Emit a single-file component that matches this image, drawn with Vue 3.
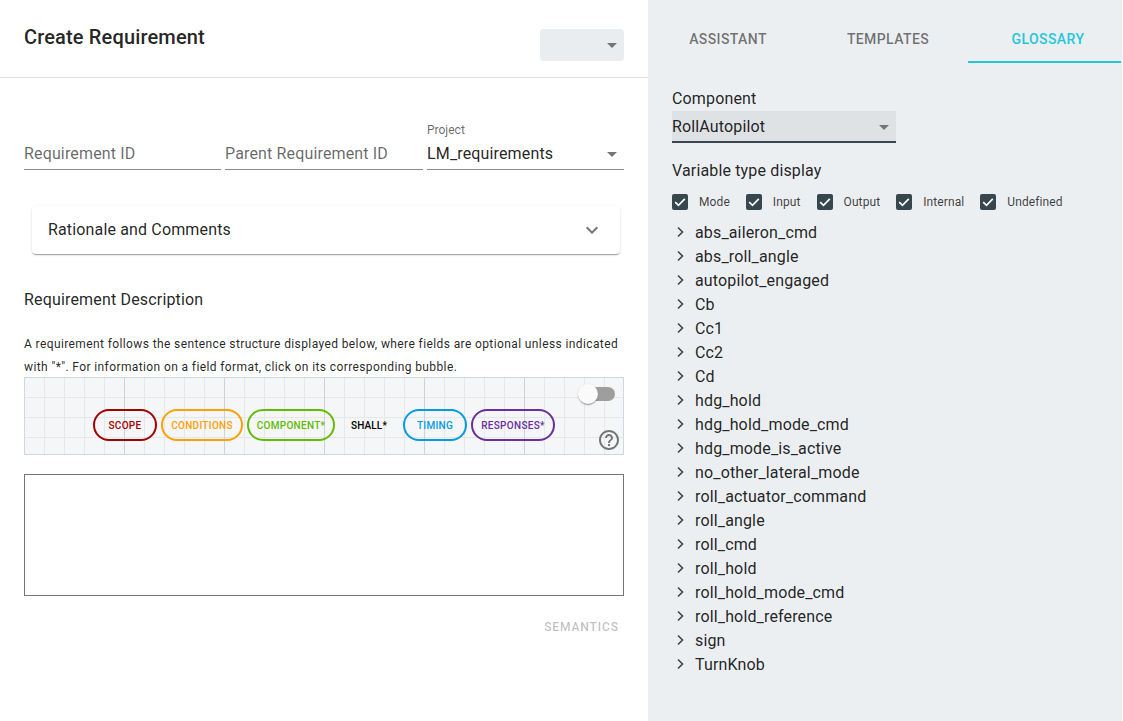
<template>
  <div class="page">
    <main class="left">
      <header class="head">
        <h1>Create Requirement</h1>
        <div class="status-select"><span class="arrow"></span></div>
      </header>

      <section class="body">
        <div class="fields">
          <div class="field"><span class="placeholder">Requirement ID</span></div>
          <div class="field"><span class="placeholder">Parent Requirement ID</span></div>
          <div class="field">
            <label>Project</label>
            <span class="value">LM_requirements</span>
            <span class="arrow"></span>
          </div>
        </div>

        <div class="accordion">
          <span>Rationale and Comments</span>
          <svg width="24" height="24" viewBox="0 0 24 24"><path d="M7.41 8.59 12 13.17l4.59-4.58L18 10l-6 6-6-6z" fill="#757575"/></svg>
        </div>

        <h2>Requirement Description</h2>
        <p class="hint">A requirement follows the sentence structure displayed below, where fields are optional unless indicated with "*". For information on a field format, click on its corresponding bubble.</p>

        <div class="sentence">
          <div class="toggle"><span class="track"></span><span class="thumb"></span></div>
          <div class="bubbles">
            <span v-for="b in bubbles" :key="b.text" class="bubble" :class="b.cls">{{ b.text }}</span>
          </div>
          <svg class="help" width="24" height="24" viewBox="0 0 24 24"><path d="M11 18h2v-2h-2v2zm1-16C6.48 2 2 6.48 2 12s4.480 10 10 10 10-4.480 10-10S17.520 2 12 2zm0 18c-4.410 0-8-3.590-8-8s3.590-8 8-8 8 3.590 8 8-3.590 8-8 8zm0-14c-2.210 0-4 1.790-4 4h2c0-1.100.9-2 2-2s2 .9 2 2c0 2-3 1.750-3 5h2c0-2.250 3-2.500 3-5 0-2.210-1.790-4-4-4z" fill="#757575"/></svg>
        </div>

        <div class="editor"></div>
        <div class="actions"><span class="semantics">SEMANTICS</span></div>
      </section>
    </main>

    <aside class="right">
      <nav class="tabs">
        <span class="tab">ASSISTANT</span>
        <span class="tab">TEMPLATES</span>
        <span class="tab active">GLOSSARY</span>
      </nav>

      <div class="glossary">
        <div class="caption">Component</div>
        <div class="comp-select">
          <span>RollAutopilot</span>
          <span class="arrow"></span>
        </div>
        <div class="caption second">Variable type display</div>
        <div class="checks">
          <div v-for="t in types" :key="t" class="check">
            <svg width="16" height="16" viewBox="0 0 16 16">
              <rect width="16" height="16" rx="2" fill="#37474f"/>
              <path d="M3.2 8.2 6.5 11.400 12.800 4.900" fill="none" stroke="#fff" stroke-width="1.700"/>
            </svg>
            <span>{{ t }}</span>
          </div>
        </div>
        <ul class="tree">
          <li v-for="v in variables" :key="v">
            <svg width="24" height="24" viewBox="0 0 24 24"><path d="M10 7.500 14.500 12 10 16.500" fill="none" stroke="#424242" stroke-width="1.600"/></svg>
            <span>{{ v }}</span>
          </li>
        </ul>
      </div>
    </aside>
  </div>
</template>

<script setup>
const bubbles = [
  { text: 'SCOPE', cls: 'scope' },
  { text: 'CONDITIONS', cls: 'conditions' },
  { text: 'COMPONENT*', cls: 'component' },
  { text: 'SHALL*', cls: 'shall' },
  { text: 'TIMING', cls: 'timing' },
  { text: 'RESPONSES*', cls: 'responses' }
]

const types = ['Mode', 'Input', 'Output', 'Internal', 'Undefined']

const variables = [
  'abs_aileron_cmd', 'abs_roll_angle', 'autopilot_engaged', 'Cb', 'Cc1', 'Cc2', 'Cd',
  'hdg_hold', 'hdg_hold_mode_cmd', 'hdg_mode_is_active', 'no_other_lateral_mode',
  'roll_actuator_command', 'roll_angle', 'roll_cmd', 'roll_hold', 'roll_hold_mode_cmd',
  'roll_hold_reference', 'sign', 'TurnKnob'
]
</script>

<style>
html, body { background: #fff; overflow: hidden; }
</style>

<style scoped>
.page {
  display: flex;
  width: 1122px;
  height: 721px;
  overflow: hidden;
  font-family: Roboto, "Liberation Sans", sans-serif;
  color: rgba(0, 0, 0, .87);
  -webkit-font-smoothing: antialiased;
}

.left {
  width: 648px;
  flex: none;
  background: #fff;
}

.head {
  height: 77px;
  box-sizing: content-box;
  border-bottom: 1px solid #e0e0e0;
  padding: 0 24px;
  display: flex;
  justify-content: space-between;
  align-items: flex-start;
}

h1 {
  margin: 24px 0 0;
  font-size: 20px;
  line-height: 26px;
  font-weight: 500;
  letter-spacing: .15px;
}

.status-select {
  width: 84px;
  height: 32px;
  margin-top: 29px;
  background: #e9edf0;
  border-radius: 4px;
  position: relative;
}

.arrow {
  position: absolute;
  width: 0;
  height: 0;
  border-left: 5px solid transparent;
  border-right: 5px solid transparent;
  border-top: 5px solid #757575;
}
.status-select .arrow { right: 7px; top: 14px; }

.body {
  padding: 0 24px;
}

.fields {
  display: grid;
  grid-template-columns: 197px 198px 197px;
  column-gap: 4px;
  margin-top: 44px;
}

.field {
  position: relative;
  height: 47px;
  border-bottom: 1px solid #8c8c8c;
  font-size: 16px;
  line-height: 20px;
  letter-spacing: .15px;
}
.field label {
  position: absolute;
  left: 0;
  top: 0;
  font-size: 12px;
  line-height: 16px;
  letter-spacing: 0;
  color: rgba(0, 0, 0, .6);
}
.placeholder, .value {
  position: absolute;
  left: 0;
  top: 22px;
}
.placeholder { color: rgba(0, 0, 0, .6); }
.field .arrow { right: 7px; top: 30px; }

.accordion {
  margin: 36px 4px 0 8px;
  height: 48px;
  padding: 0 16px 1px;
  box-sizing: border-box;
  display: flex;
  align-items: center;
  justify-content: space-between;
  border-radius: 4px;
  font-size: 16px;
  letter-spacing: .15px;
  box-shadow: 0 2px 1px -1px rgba(0, 0, 0, .2), 0 1px 1px 0 rgba(0, 0, 0, .14), 0 1px 3px 0 rgba(0, 0, 0, .12);
}

h2 {
  margin: 36px 0 0;
  font-size: 16px;
  line-height: 20px;
  font-weight: 400;
  letter-spacing: .17px;
}

.hint {
  margin: 23px 0 -2px;
  font-size: 12px;
  line-height: 23px;
  letter-spacing: .39px;
}

.sentence {
  position: relative;
  height: 78px;
  box-sizing: border-box;
  border: 1px solid #cfd8dc;
  background-color: #f4f6f8;
  background-image:
    linear-gradient(90deg, #ccd2d6 1px, transparent 1px),
    linear-gradient(90deg, #e5e8eb 1px, transparent 1px),
    linear-gradient(#e5e8eb 1px, transparent 1px);
  background-size: 100px 100%, 20px 100%, 100% 20px;
  background-position: -1px 0, -1px 0, 0 -1px;
}

.toggle {
  position: absolute;
  right: 8px;
  top: 6px;
  width: 37px;
  height: 20px;
}
.track {
  position: absolute;
  right: 0;
  top: 3px;
  width: 34px;
  height: 14px;
  border-radius: 7px;
  background: #9e9e9e;
}
.thumb {
  position: absolute;
  left: 0;
  top: 0;
  width: 20px;
  height: 20px;
  border-radius: 50%;
  background: #fafafa;
  box-shadow: 0 2px 1px -1px rgba(0, 0, 0, .2), 0 1px 1px 0 rgba(0, 0, 0, .14), 0 1px 3px 0 rgba(0, 0, 0, .12);
}

.bubbles {
  display: flex;
  gap: 4px;
  padding: 31px 0 0 68px;
}

.bubble {
  box-sizing: border-box;
  height: 32px;
  border: 2px solid;
  border-radius: 16px;
  display: flex;
  align-items: center;
  justify-content: center;
  font-size: 10px;
  font-weight: 500;
  letter-spacing: .3px;
}
.scope { width: 64px; color: #a30000; }
.conditions { width: 82px; color: #ffa000; }
.component { width: 88px; color: #64bb00; }
.shall { width: 60px; border-color: transparent; color: #000; letter-spacing: .15px; }
.timing { width: 64px; color: #039be5; }
.responses { width: 84px; color: #6a2e9e; }

.help {
  position: absolute;
  right: 2px;
  bottom: 2px;
}

.editor {
  height: 122px;
  margin-top: 19px;
  box-sizing: border-box;
  border: 1px solid #757575;
}

.actions {
  display: flex;
  justify-content: flex-end;
  padding: 23px 5px 0 0;
}
.semantics {
  font-size: 12px;
  line-height: 16px;
  font-weight: 500;
  letter-spacing: .9px;
  color: rgba(0, 0, 0, .26);
}

.right {
  flex: 1;
  min-width: 0;
  background: #eceff2;
}

.tabs {
  display: flex;
  width: 473px;
  overflow: hidden;
}

.tab {
  flex: none;
  width: 160px;
  height: 63px;
  box-sizing: border-box;
  padding-top: 31px;
  text-align: center;
  font-size: 14px;
  line-height: 16px;
  font-weight: 500;
  letter-spacing: .4px;
  color: rgba(0, 0, 0, .54);
}
.tab.active {
  color: #26c6da;
  border-bottom: 2px solid #26c6da;
}

.glossary {
  padding: 26px 24px 0;
}

.caption {
  font-size: 16px;
  line-height: 20px;
  letter-spacing: .15px;
}
.caption.second { margin-top: 18px; }

.comp-select {
  position: relative;
  width: 224px;
  height: 32px;
  margin-top: 2px;
  box-sizing: border-box;
  display: flex;
  align-items: center;
  background: #dfe2e5;
  border-bottom: 2px solid #37474f;
  font-size: 16px;
  letter-spacing: .15px;
}
.comp-select .arrow { right: 7px; top: 14px; }

.checks {
  display: flex;
  gap: 16px;
  margin-top: 13px;
}
.check {
  display: flex;
  align-items: center;
  gap: 11px;
  font-size: 12px;
  line-height: 16px;
  letter-spacing: .1px;
  color: rgba(0, 0, 0, .75);
}

.tree {
  list-style: none;
  margin: 10px 0 0;
  padding: 0;
}
.tree li {
  display: flex;
  align-items: center;
  height: 24px;
  font-size: 16px;
  letter-spacing: .15px;
}
.tree svg { margin-right: 3px; flex: none; margin-left: -4px; }
</style>
